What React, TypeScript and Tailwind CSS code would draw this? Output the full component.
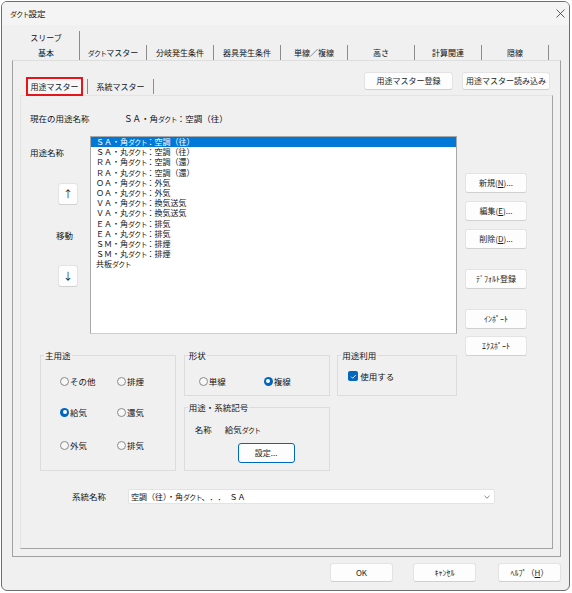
import { ReactNode } from 'react'

// narrow kana, like the dialog's UI font
const Dk = () => <span className="text-[7px] tracking-[-0.8px]">ダクト</span>

const items: [string, string][] = [
  ['ＳＡ・角', '：空調（往）'],
  ['ＳＡ・丸', '：空調（往）'],
  ['ＲＡ・角', '：空調（還）'],
  ['ＲＡ・丸', '：空調（還）'],
  ['ＯＡ・角', '：外気'],
  ['ＯＡ・丸', '：外気'],
  ['ＶＡ・角', '：換気送気'],
  ['ＶＡ・丸', '：換気送気'],
  ['ＥＡ・角', '：排気'],
  ['ＥＡ・丸', '：排気'],
  ['ＳＭ・角', '：排煙'],
  ['ＳＭ・丸', '：排煙'],
  ['共板', ''],
]

const tabs = ['基本', 'ダクトマスター', '分岐発生条件', '器具発生条件', '単線／複線', '高さ', '計算関連', '隠線']

function Btn({ children, className = '', focused }: { children: ReactNode; className?: string; focused?: boolean }) {
  return (
    <button
      className={`flex items-center justify-center bg-[#fdfdfd] border rounded-[3px] text-[8px] leading-none text-[#1b1b1b] ${
        focused ? 'border-[#0067c0]' : 'border-[#e3e3e3] border-b-[#d0d0d0]'
      } ${className}`}
    >
      {children}
    </button>
  )
}

function Radio({ checked, label, className = '' }: { checked?: boolean; label: string; className?: string }) {
  return (
    <div className={`flex items-center h-[12px] ${className}`}>
      {checked ? (
        <span className="w-[9px] h-[9px] rounded-full bg-[#0067c0] flex items-center justify-center">
          <span className="w-[4px] h-[4px] rounded-full bg-white" />
        </span>
      ) : (
        <span className="w-[9px] h-[9px] rounded-full border border-[#8a8a8a] bg-[#f7f7f7]" />
      )}
      <span className="ml-[1px]">{label}</span>
    </div>
  )
}

function Group({ title, className = '', children }: { title: string; className?: string; children?: ReactNode }) {
  return (
    <fieldset className={`border border-[#dcdcdc] ${className}`}>
      <legend className="ml-[3px] px-[1px] leading-[12px]">{title}</legend>
      {children}
    </fieldset>
  )
}

export default function App() {
  return (
    <div className="w-[572px] h-[593px] bg-white overflow-hidden font-['Noto_Sans_CJK_JP','Noto_Sans',sans-serif] text-[8.5px] text-[#111]">
      <div className="ml-[1px] mt-[1px] w-[569px] h-[590px] border border-[#6e6e6e] rounded-[6px] bg-[#f0f0f0] flex flex-col overflow-hidden">
        {/* title bar */}
        <div className="h-[23px] flex items-center justify-between pl-[8px] pr-[4px] bg-[#f4f4f4]">
          <span>
            <Dk />設定
          </span>
          <svg className="w-[9px] h-[9px]" viewBox="0 0 9 9" stroke="#333" strokeWidth={0.8} fill="none">
            <path d="M0.5 0.5l8 8M8.5 0.5l-8 8" />
          </svg>
        </div>

        {/* tab control */}
        <div className="ml-[10px] mt-[6px] w-[549px] flex flex-col text-[8px]">
          <div className="h-[14px] flex pl-[1px]">
            <div className="w-[67px] flex items-center justify-center border-r border-[#8c8c8c]">スリーブ</div>
          </div>
          <div className="h-[15px] flex pl-[1px]">
            {tabs.map((t) => (
              <div key={t} className="w-[67px] flex items-center justify-center border-r border-[#8c8c8c]">
                {t === 'ダクトマスター' ? (
                  <span>
                    <Dk />マスター
                  </span>
                ) : (
                  t
                )}
              </div>
            ))}
          </div>

          {/* outer panel */}
          <div className="h-[497px] border border-[#a0a0a0] border-t-[#dedede] flex flex-col text-[8.5px]">
            <div className="h-[34px] flex items-start">
              <div className="ml-[13px] mt-[16px] flex items-center text-[8px]">
                <div className="relative z-10 w-[57px] h-[19px] border-2 border-[#e8141c] bg-[#f7f7f7] flex items-center justify-center">
                  用途マスター
                </div>
                <div className="w-[5px] h-[15px] border-r border-[#8c8c8c]" />
                <div className="w-[66px] h-[15px] border-r border-[#8c8c8c] flex items-center justify-center">系統マスター</div>
              </div>
              <div className="ml-auto mr-[10px] mt-[11px] flex gap-[9px]">
                <Btn className="w-[89px] h-[18px]">用途マスター登録</Btn>
                <Btn className="w-[88px] h-[18px]">用途マスター読み込み</Btn>
              </div>
            </div>

            {/* inner panel */}
            <div className="ml-[7px] w-[533px] h-[454px] border border-[#e4e4e4] border-r-[#a3a3a3] border-b-[#a3a3a3] flex flex-col">
              <div className="mt-[16px] h-[12px] pl-[9px] flex items-center">
                <span className="w-[94px]">現在の用途名称</span>
                <span>
                  ＳＡ・角<Dk />：空調（往）
                </span>
              </div>

              <div className="mt-[12px] flex">
                <div className="w-[436px] flex flex-col">
                  <div className="flex h-[198px]">
                    <div className="w-[69px] flex flex-col">
                      <div className="mt-[10px] h-[12px] pl-[9px] flex items-center">用途名称</div>
                      <Btn className="ml-[37px] mt-[25px] w-[20px] h-[22px] text-[10px]">↑</Btn>
                      <div className="mt-[24px] h-[12px] pl-[35px] flex items-center">移動</div>
                      <Btn className="ml-[37px] mt-[24px] w-[20px] h-[22px] text-[10px]">↓</Btn>
                    </div>
                    <div className="w-[367px] h-[198px] bg-white border border-[#a8a8a8] border-b-[#cfcfcf] flex flex-col text-[8px]">
                      {items.map(([a, b], i) => (
                        <div
                          key={a + b}
                          className={`h-[10.2px] leading-[10.2px] pl-[5px] whitespace-nowrap ${i === 0 ? 'bg-[#0078d7] text-white' : ''}`}
                        >
                          {a}
                          <Dk />
                          {b}
                        </div>
                      ))}
                    </div>
                  </div>

                  <div className="mt-[15px] flex">
                    <Group title="主用途" className="ml-[19px] w-[136px] h-[122px]">
                      <div className="pl-[19px] grid grid-cols-[57px_1fr]">
                        <Radio label="その他" className="mt-[14px]" />
                        <Radio label="排煙" className="mt-[14px]" />
                        <Radio label="給気" checked className="mt-[19px]" />
                        <Radio label="還気" className="mt-[19px]" />
                        <Radio label="外気" className="mt-[21px]" />
                        <Radio label="排気" className="mt-[21px]" />
                      </div>
                    </Group>
                    <div className="ml-[8px] w-[147px] flex flex-col">
                      <Group title="形状" className="h-[47px]">
                        <div className="pl-[14px] flex">
                          <Radio label="単線" className="mt-[14px] w-[65px]" />
                          <Radio label="複線" checked className="mt-[14px]" />
                        </div>
                      </Group>
                      <Group title="用途・系統記号" className="mt-[5px] h-[70px]">
                        <div className="mt-[10px] h-[12px] pl-[10px] flex items-center">
                          <span className="w-[30px]">名称</span>
                          <span>
                            給気<Dk />
                          </span>
                        </div>
                        <Btn focused className="ml-[53px] mt-[8px] w-[57px] h-[20px]">
                          設定...
                        </Btn>
                      </Group>
                    </div>
                    <Group title="用途利用" className="ml-[7px] w-[120px] h-[47px]">
                      <div className="mt-[9px] h-[12px] pl-[10px] flex items-center">
                        <span className="w-[10px] h-[10px] rounded-[2px] bg-[#0067c0] flex items-center justify-center">
                          <svg className="w-[7px] h-[7px]" viewBox="0 0 8 8" fill="none" stroke="white" strokeWidth={1}>
                            <path d="M1.3 4.2l1.8 1.8 3.6-3.8" />
                          </svg>
                        </span>
                        <span className="ml-[2px]">使用する</span>
                      </div>
                    </Group>
                  </div>
                </div>

                <div className="ml-[8px] w-[62px] flex flex-col">
                  <Btn className="mt-[37px] h-[20px]">新規(<u>N</u>)...</Btn>
                  <Btn className="mt-[8px] h-[20px]">編集(<u>E</u>)...</Btn>
                  <Btn className="mt-[8px] h-[20px]">削除(<u>D</u>)...</Btn>
                  <Btn className="mt-[20px] h-[20px]">ﾃﾞﾌｫﾙﾄ登録</Btn>
                  <Btn className="mt-[20px] h-[20px]">ｲﾝﾎﾟｰﾄ</Btn>
                  <Btn className="mt-[7px] h-[20px]">ｴｸｽﾎﾟｰﾄ</Btn>
                </div>
              </div>

              <div className="mt-[18px] h-[15px] flex items-center pl-[51px]">
                <span className="w-[56px]">系統名称</span>
                <div className="w-[367px] h-[15px] bg-white border border-[#e3e3e3] rounded-[2px] flex items-center pl-[2px] pr-[4px] text-[8px]">
                  <span className="flex-1 whitespace-nowrap">
                    空調（往）・角<Dk />
                    <span className="tracking-[4px]">、．．</span>ＳＡ
                  </span>
                  <svg className="w-[6px] h-[4px]" viewBox="0 0 6 4" fill="none" stroke="#666" strokeWidth={0.8}>
                    <path d="M0.5 0.8l2.5 2.4 2.5-2.4" />
                  </svg>
                </div>
              </div>
            </div>
          </div>

          <div className="mt-[6px] flex justify-end">
            <Btn className="w-[63px] h-[19px]">OK</Btn>
            <Btn className="ml-[20px] w-[63px] h-[19px]">ｷｬﾝｾﾙ</Btn>
            <Btn className="ml-[22px] w-[63px] h-[19px]">
              ﾍﾙﾌﾟ（<u>H</u>）
            </Btn>
          </div>
        </div>
      </div>
    </div>
  )
}
